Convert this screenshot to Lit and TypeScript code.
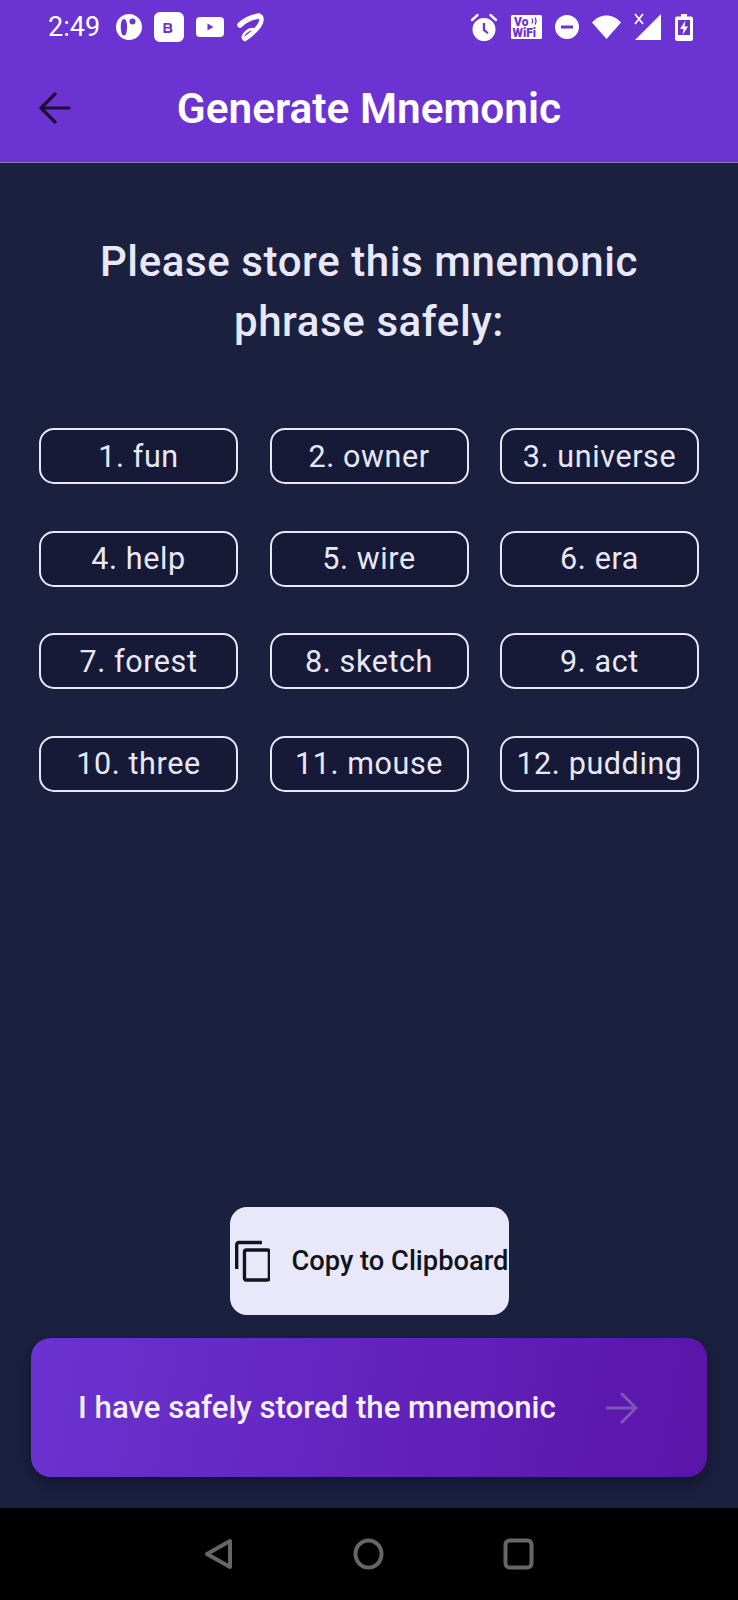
import { LitElement, css, html } from "lit";
import { customElement } from "lit/decorators.js";

const WORDS = [
  "fun", "owner", "universe",
  "help", "wire", "era",
  "forest", "sketch", "act",
  "three", "mouse", "pudding",
];

@customElement("app-root")
export class AppRoot extends LitElement {
  static styles = css`
    :host {
      display: block;
      width: 738px;
      height: 1600px;
      font-family: Roboto, "Noto Sans", sans-serif;
    }
    .page {
      height: 1600px;
      display: flex;
      flex-direction: column;
      background: #1b203f;
    }
    .top {
      height: 163px;
      flex: none;
      background: #6b33d1;
      border-bottom: 1px solid #8d79b8;
      box-sizing: border-box;
      display: flex;
      flex-direction: column;
    }
    .status {
      height: 54px;
      padding: 0 45px 0 48px;
      display: flex;
      align-items: center;
      color: #fff;
    }
    .time {
      font-size: 27px;
      width: 67px;
      flex: none;
    }
    .status svg {
      display: block;
      flex: none;
      fill: #fff;
    }
    .left {
      display: flex;
      align-items: center;
      gap: 11px;
    }
    .right {
      margin-left: auto;
      display: flex;
      align-items: center;
      gap: 13px;
    }
    .bar {
      flex: 1;
      display: grid;
      grid-template-columns: 1fr auto 1fr;
      align-items: center;
      padding: 0 39px;
    }
    .bar svg {
      display: block;
    }
    h1 {
      margin: 0;
      font-size: 42.4px;
      font-weight: 600;
      color: #fff;
    }
    main {
      flex: 1;
      display: flex;
      flex-direction: column;
      align-items: center;
    }
    h2 {
      margin: 69px 0 0;
      width: 600px;
      text-align: center;
      font-size: 42px;
      line-height: 60px;
      font-weight: 500;
      letter-spacing: 0.6px;
      color: #e8e8fa;
    }
    .words {
      margin-top: 76px;
      display: grid;
      grid-template-columns: repeat(3, 199px);
      grid-auto-rows: 56px;
      column-gap: 31.5px;
      row-gap: 46.5px;
    }
    .word {
      box-sizing: border-box;
      border: 2px solid #e8e8fa;
      border-radius: 15px;
      background: #171a36;
      color: #e8e8fa;
      font-size: 30.5px;
      letter-spacing: 0.6px;
      white-space: nowrap;
      display: flex;
      align-items: center;
      justify-content: center;
    }
    .copy {
      margin-top: auto;
      width: 279px;
      height: 108px;
      flex: none;
      box-sizing: border-box;
      padding-left: 5px;
      background: #e8e8fa;
      border-radius: 17px;
      display: flex;
      align-items: center;
      gap: 21px;
      color: #11131f;
      font-size: 27.3px;
      font-weight: 500;
      white-space: nowrap;
    }
    .next {
      margin: 23px 0 31px;
      width: 676px;
      height: 139px;
      flex: none;
      box-sizing: border-box;
      padding: 0 69px 0 47px;
      border-radius: 20px;
      background: linear-gradient(100deg, #6b33d1, #5a14a8);
      box-shadow: 0 6px 14px rgba(10, 12, 30, 0.55);
      display: flex;
      align-items: center;
      justify-content: space-between;
      color: #f3effc;
      font-size: 31.2px;
      font-weight: 500;
      white-space: nowrap;
    }
    nav {
      height: 92px;
      flex: none;
      background: #000;
      display: flex;
      align-items: center;
      justify-content: center;
      gap: 119px;
    }
    nav svg {
      display: block;
      fill: none;
      stroke: #666;
      stroke-width: 4;
      stroke-linejoin: round;
    }
  `;

  render() {
    return html`
      <div class="page">
        <header class="top">
          <div class="status">
            <span class="time">2:49</span>
            <div class="left">
              <svg width="28" height="28" viewBox="0 0 28 28">
                <path fill-rule="evenodd" d="M14 1a13 13 0 1 1 0 26a13 13 0 0 1 0-26ZM9 6c-2 0-3.200 3-3.200 8s1.200 8.500 3.200 8.500 3-3.500 3-8.500-1-8-3-8ZM17.500 5.500a3 3 0 1 0 0 6a3 3 0 0 0 0-6Z" />
              </svg>
              <svg width="30" height="30" viewBox="0 0 30 30">
                <path fill-rule="evenodd" d="M6 0h18a6 6 0 0 1 6 6v18a6 6 0 0 1-6 6H6a6 6 0 0 1-6-6V6a6 6 0 0 1 6-6ZM9.500 11v10h5.500c2.200 0 3.500-1 3.500-2.800 0-1.200-.6-2-1.600-2.300.8-.4 1.200-1.100 1.200-2 0-1.800-1.200-2.900-3.300-2.900ZM11.700 12.800h2.800c.8 0 1.200.4 1.200 1s-.4 1.100-1.200 1.100h-2.800ZM11.700 16.500h3c.9 0 1.400.4 1.400 1.200s-.5 1.200-1.400 1.200h-3Z" />
              </svg>
              <svg width="30" height="22" viewBox="0 0 30 22">
                <path fill-rule="evenodd" d="M5 1h20a4 4 0 0 1 4 4v12a4 4 0 0 1-4 4H5a4 4 0 0 1-4-4V5a4 4 0 0 1 4-4ZM12.500 7.500v7l6-3.500Z" />
              </svg>
              <svg width="30" height="30" viewBox="0 0 30 30" style="fill:none" stroke="#fff" stroke-linecap="round">
                <path stroke-width="5.500" d="M4 13C9 8 16 5 23 4" />
                <path stroke-width="4.500" d="M25 5C28 12 16 22 9 27" />
                <path stroke-width="2.600" d="M9 27C5 28 7 22 10 20 12 18 14 17 17 17" />
              </svg>
            </div>
            <div class="right">
              <svg width="28" height="28" viewBox="0 0 28 28">
                <path fill-rule="evenodd" d="M14 5a11.500 11.500 0 1 1 0 23a11.500 11.500 0 0 1 0-23ZM12.800 10v7.500l4.500 3.500 1.300-1.600-3.500-2.800V10Z" />
                <path fill="none" stroke="#fff" stroke-width="2.400" stroke-linecap="round" d="M2 7 7.500 2M26 7 20.500 2" />
              </svg>
              <svg width="31" height="24" viewBox="0 0 31 24">
                <rect x="0" y="0" width="31" height="24" rx="1.500" />
                <text x="3" y="11" font-family="Roboto" font-size="12" font-weight="900" fill="#6b33d1">Vo</text>
                <path fill="none" stroke="#6b33d1" stroke-width="1.300" d="M21 3.500c.8 1.500.8 3.500 0 5M24 2.500c1.200 2.200 1.200 5 0 7" />
                <text x="1.500" y="22" font-family="Roboto" font-size="12" font-weight="900" fill="#6b33d1">WiFi</text>
              </svg>
              <svg width="24" height="24" viewBox="0 0 24 24">
                <path fill-rule="evenodd" d="M12 0a12 12 0 1 1 0 24a12 12 0 0 1 0-24ZM6 10.500v3h12v-3Z" />
              </svg>
              <svg width="29" height="24" viewBox="0 0 29 24">
                <path d="M0 7.500C8-2 21-2 29 7.500L14.500 24Z" />
              </svg>
              <svg width="28" height="28" viewBox="0 0 28 28">
                <path d="M27 1v26H1Z" />
                <path fill="none" stroke="#fff" stroke-width="1.800" d="M1 1 9 11M9 1 1 11" />
              </svg>
              <svg width="18" height="27" viewBox="0 0 18 27">
                <path fill-rule="evenodd" d="M6 0h6v2.500h4a2 2 0 0 1 2 2V25a2 2 0 0 1-2 2H2a2 2 0 0 1-2-2V4.500a2 2 0 0 1 2-2h4ZM3 6v15h12V6Z" />
                <path d="M10.500 6.500 5 15h3.500l-1 6L13 12.500H9.500Z" />
              </svg>
            </div>
          </div>
          <div class="bar">
            <svg width="32" height="32" viewBox="0 0 32 32" fill="none" stroke="#1d1035" stroke-width="3.200" stroke-linecap="round" stroke-linejoin="round">
              <path d="M30 16H2M16 2 2 16l14 14" />
            </svg>
            <h1>Generate Mnemonic</h1>
            <span></span>
          </div>
        </header>
        <main>
          <h2>Please store this mnemonic phrase safely:</h2>
          <div class="words">
            ${WORDS.map((w, i) => html`<div class="word">${i + 1}. ${w}</div>`)}
          </div>
          <div class="copy">
            <svg width="36" height="42" viewBox="0 0 36 42" fill="none" stroke="#11131f" stroke-width="3.400">
              <path d="M1.700 29V4.500a2 2 0 0 1 2-2H27" />
              <rect x="9.500" y="10" width="25" height="30" rx="2" />
            </svg>
            <span>Copy to Clipboard</span>
          </div>
          <div class="next">
            <span>I have safely stored the mnemonic</span>
            <svg width="32" height="32" viewBox="0 0 32 32" fill="none" stroke="#7c55b5" stroke-width="3" stroke-linecap="round" stroke-linejoin="round">
              <path d="M1 16h29M16 2l14 14-14 14" />
            </svg>
          </div>
        </main>
        <nav>
          <svg width="30" height="32" viewBox="0 0 30 32">
            <path d="M26 3v26L3 16Z" />
          </svg>
          <svg width="31" height="32" viewBox="0 0 31 32">
            <ellipse cx="15.500" cy="16" rx="13" ry="13.500" />
          </svg>
          <svg width="31" height="32" viewBox="0 0 31 32">
            <rect x="2.500" y="2.500" width="26" height="27" rx="4" />
          </svg>
        </nav>
      </div>
    `;
  }
}
